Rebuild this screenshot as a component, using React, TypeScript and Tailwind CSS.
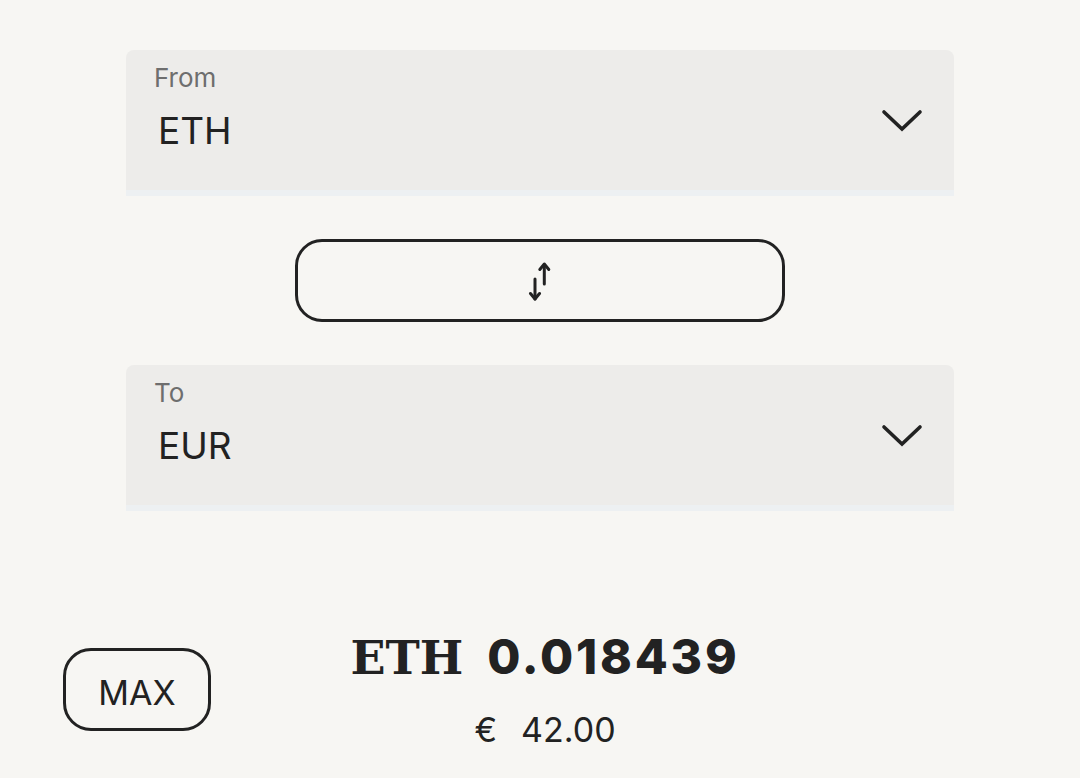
import React, { useState } from 'react';

const sans = { fontFamily: 'Inter, "Noto Sans", sans-serif' };

const Chevron: React.FC = () => (
  <svg width="42" height="24" viewBox="0 0 42 24" fill="none">
    <polyline
      points="3,3 21,20 39,3"
      stroke="#222222"
      strokeWidth="3.6"
      strokeLinecap="round"
      strokeLinejoin="miter"
    />
  </svg>
);

const SwapIcon: React.FC = () => (
  <svg width="24" height="40" viewBox="0 0 24 40" fill="none" stroke="#222222" strokeWidth="3" strokeLinecap="round" strokeLinejoin="round">
    {/* up arrow */}
    <line x1="16.3" y1="4" x2="16.3" y2="23" />
    <polyline points="11.8,8.5 16.3,3 20.8,8.5" />
    {/* down arrow */}
    <line x1="7" y1="18" x2="7" y2="38" />
    <polyline points="2.5,32.5 7,38 11.5,32.5" />
  </svg>
);

interface SelectProps {
  label: string;
  value: string;
}

const CurrencySelect: React.FC<SelectProps> = ({ label, value }) => (
  <div>
    <div className="flex h-[140px] items-center justify-between rounded-t-lg bg-[#edecea] pr-[31px]">
      <div className="flex h-full flex-col pt-[12px]">
        <span className="pl-[28px] text-[26px] leading-[31px] text-[#6e6e6e]">{label}</span>
        <span className="mt-[15px] pl-[32px] text-[37px] leading-[45px] text-[#222222]">{value}</span>
      </div>
      <div className="mt-[2px]">
        <Chevron />
      </div>
    </div>
    <div className="h-[6px] bg-[#edf0f2]" />
  </div>
);

const App: React.FC = () => {
  const [from, setFrom] = useState('ETH');
  const [to, setTo] = useState('EUR');

  // 통화 교환
  const swap = () => {
    setFrom(to);
    setTo(from);
  };

  return (
    <div className="min-h-[778px] w-full bg-[#f7f6f3] pt-[50px]" style={sans}>
      <div className="mx-auto w-[828px]">
        <CurrencySelect label="From" value={from} />

        <div className="mt-[43px] flex justify-center">
          <button
            onClick={swap}
            className="flex h-[83px] w-[490px] items-center justify-center rounded-[27px] border-[3px] border-[#222222]"
          >
            <SwapIcon />
          </button>
        </div>

        <div className="mt-[43px]">
          <CurrencySelect label="To" value={to} />
        </div>
      </div>

      <div className="mt-[117px] grid grid-cols-[1fr_auto_1fr] items-center">
        <div className="pl-[63px]">
          <button className="flex h-[83px] w-[148px] items-center justify-center rounded-[28px] border-[3px] border-[#222222] pt-[6px] text-[34px] leading-[41px] text-[#222222]">
            MAX
          </button>
        </div>

        <div className="ml-[10px] flex flex-col items-center text-[#222222]">
          <div className="flex items-baseline gap-[24px]">
            <span className="text-[46px] font-bold leading-[58px]" style={{ fontFamily: '"DejaVu Serif", serif' }}>
              ETH
            </span>
            <span className="text-[48px] font-extrabold leading-[58px] tracking-[2.8px]">0.018439</span>
          </div>
          <div className="mt-[22px] flex items-baseline gap-[24px] text-[34px] leading-[41px]">
            <span>€</span>
            <span>42.00</span>
          </div>
        </div>

        <div />
      </div>
    </div>
  );
};

export default App;
